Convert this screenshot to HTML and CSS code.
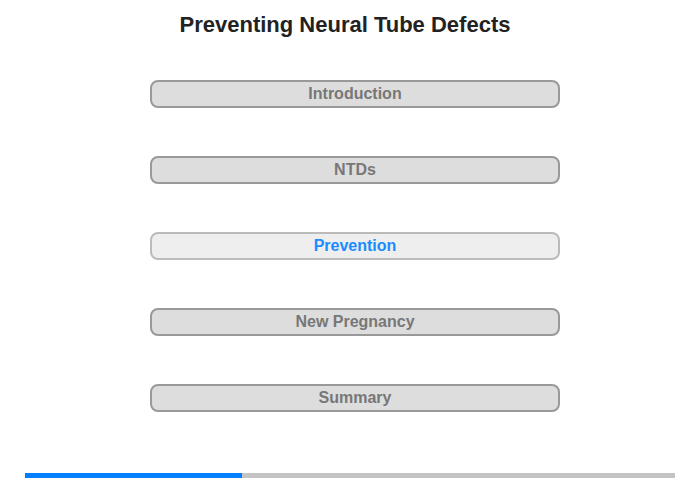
FILE: index.html
```html
<!DOCTYPE html>
<html>
<head>
<meta charset="utf-8">
<link rel="stylesheet" href="styles.css">
</head>
<body>
<div class="page">
  <h1 class="title">Preventing Neural Tube Defects</h1>
  <nav class="menu">
    <div class="item">Introduction</div>
    <div class="item">NTDs</div>
    <div class="item active">Prevention</div>
    <div class="item">New Pregnancy</div>
    <div class="item">Summary</div>
  </nav>
  <div class="progress"><div class="progress-fill" style="width:33.4%"></div></div>
</div>
</body>
</html>
```
FILE: styles.css
```css
html, body {
  margin: 0;
  padding: 0;
  background: #fff;
}
.page {
  width: 700px;
  height: 480px;
  display: flex;
  flex-direction: column;
  font-family: "Liberation Sans", Arial, sans-serif;
}
.title {
  margin: 0;
  padding: 11px 10px 0 0;
  height: 28px;
  line-height: 28px;
  font-size: 22px;
  font-weight: bold;
  color: #222;
  text-align: center;
}
.menu {
  display: flex;
  flex-direction: column;
  gap: 48px;
  margin: 41px 0 0 150px;
  width: 410px;
}
.item {
  box-sizing: border-box;
  height: 28px;
  border: 2px solid #999;
  border-radius: 8px;
  background: #ddd;
  color: #777;
  font-size: 16px;
  font-weight: bold;
  line-height: 24px;
  text-align: center;
}
.item.active {
  background: #eee;
  border-color: #bbb;
  color: #1a8cff;
}
.progress {
  margin: 61px 0 0 25px;
  width: 650px;
  height: 5px;
  background: #c4c4c4;
}
.progress-fill {
  height: 100%;
  background: #0080ff;
}
```
